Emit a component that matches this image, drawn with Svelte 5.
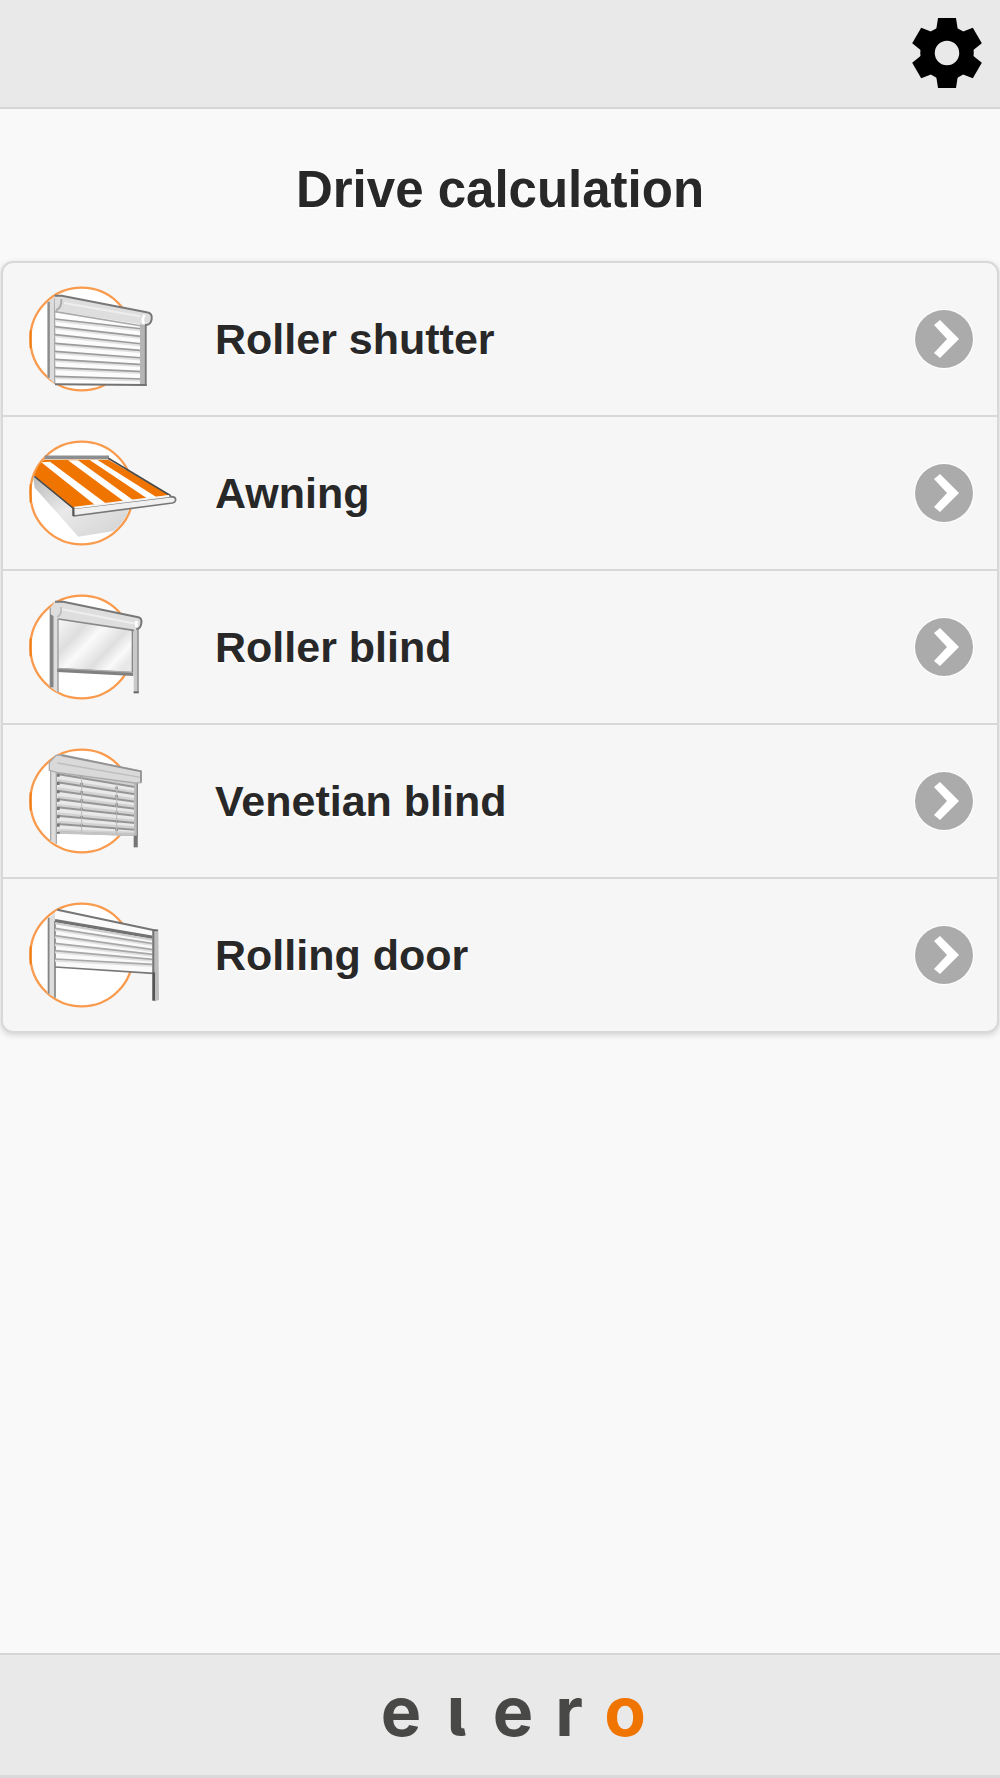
<script>
  const drives = [
    { id: "shutter", label: "Roller shutter" },
    { id: "awning", label: "Awning" },
    { id: "blind", label: "Roller blind" },
    { id: "venetian", label: "Venetian blind" },
    { id: "door", label: "Rolling door" },
  ];

  // [y at the left post, y at the right post]
  const shutterSlats = [[102, 132], [125, 155], [149, 177], [175, 197], [199, 219], [223, 239], [248, 260], [274, 282]];
  const venetianSlats = [[81, 120], [106, 142], [131, 164], [156, 185], [181, 206], [206, 228], [231, 248], [256, 264]];
  const doorSlats = [[82, 128], [104, 146], [127, 160], [149, 175], [174, 190]];
</script>

<div class="page">
  <header>
    <button class="settings" aria-label="Settings">
      <svg viewBox="-36 -36 72 72" aria-hidden="true">
        <circle r="19.5" fill="none" stroke="#000" stroke-width="14.5" />
        {#each [0, 60, 120, 180, 240, 300] as angle}
          <path d="M-9-35H9L11-22H-11Z" transform={`rotate(${angle})`} />
        {/each}
      </svg>
    </button>
  </header>

  <main>
    <h1>Drive calculation</h1>

    <ul class="drives">
      {#each drives as drive}
        <li>
          <a href={`#${drive.id}`}>
            <svg class="picture" viewBox="0 0 450 324" aria-hidden="true">
              <circle cx="161" cy="162" r="154" fill="#fff" stroke="#f99a4c" stroke-width="7" />
              <path d="M8 136V190" stroke="#f07d14" stroke-width="6" />

              {#if drive.id === "shutter"}
                <path d="M81 60L350 110V300H81Z" fill="#fcfcfc" />
                <path d="M58 54L81 32V297L58 276Z" fill="#dcdcdc" />
                <path d="M62 50V278" stroke="#8c8c8c" stroke-width="7" />
                <path d="M80 40V296" stroke="#a8a8a8" stroke-width="4" />
                {#each shutterSlats as [left, right]}
                  <path d={`M81 ${left + 4}L346 ${right + 4}`} stroke="#e2e2e2" stroke-width="8" />
                  <path d={`M81 ${left}L346 ${right}`} stroke="#9b9b9b" stroke-width="5" />
                {/each}
                <path d="M336 112H356V302H336Z" fill="#b5b5b5" />
                <path d="M353 112V302" stroke="#777" stroke-width="5" />
                <path d="M81 298L356 300" stroke="#737373" stroke-width="6" />
                <path d="M80 32L101 32L356 82Q374 84 371 103Q368 121 351 120L81 77Z" fill="#dedede" />
                <path d="M81 80L342 123" stroke="#aaa" stroke-width="5" />
                <path d="M108 54L336 94" stroke="#eee" stroke-width="6" />
                <path d="M80 32H101L356 82Q374 84 371 103Q368 121 351 120" fill="none" stroke="#777" stroke-width="6" />
                <path d="M84 76Q102 68 100 42" fill="none" stroke="#aaa" stroke-width="6" />
                <path d="M350 90Q340 104 348 116" fill="none" stroke="#fff" stroke-width="8" />
              {:else if drive.id === "awning"}
                <defs>
                  <linearGradient id="awning-shade" x1="0" y1="0" x2="1" y2="1">
                    <stop offset="0" stop-color="#bbb" />
                    <stop offset="0.45" stop-color="#e9e9e9" />
                    <stop offset="1" stop-color="#d2d2d2" />
                  </linearGradient>
                </defs>
                <path d="M15 112L138 215L303 211Q293 246 258 276L151 293L20 146Z" fill="url(#awning-shade)" />
                <path d="M50 55H243" stroke="#8b8f92" stroke-width="11" />
                <path d="M50 62H241L426 168L138 209L19 110Q27 84 42 68Z" fill="#f07400" />
                <g fill="#fff">
                  <path d="M40 70L66 68L236 195L204 200Z" />
                  <path d="M120 64L150 64L318 185L290 189Z" />
                  <path d="M185 63L209 63L386 175L360 180Z" />
                </g>
                <path d="M19 112L136 208M241 58L428 170" stroke="#4b4b4b" stroke-width="5" />
                <path d="M136 208L430 173Q443 173 443 183Q442 190 433 192L137 231Z" fill="#f0f0f0" stroke="#777" stroke-width="5" stroke-linejoin="round" />
                <path d="M139 206L424 171" stroke="#f5f5f5" stroke-width="6" />
                <path d="M136 206V231" stroke="#555" stroke-width="6" />
              {:else if drive.id === "blind"}
                <defs>
                  <linearGradient id="glass" x1="0" y1="0" x2="1" y2="0.7">
                    <stop offset="0" stop-color="#f7f7f7" />
                    <stop offset="0.3" stop-color="#dedede" />
                    <stop offset="0.48" stop-color="#fafafa" />
                    <stop offset="0.72" stop-color="#dfdfdf" />
                    <stop offset="0.88" stop-color="#fafafa" />
                    <stop offset="1" stop-color="#e8e8e8" />
                  </linearGradient>
                </defs>
                <path d="M91 78L313 110V240L91 230Z" fill="url(#glass)" />
                <path d="M64 48L91 30V300L64 280Z" fill="#ddd" />
                <path d="M71 44V283" stroke="#858585" stroke-width="11" />
                <path d="M90 75V298" stroke="#9a9a9a" stroke-width="4" />
                <path d="M88 231L316 243" stroke="#818181" stroke-width="12" />
                <path d="M88 226L316 238" stroke="#aaa" stroke-width="4" />
                <path d="M313 108H331V300H317V240H313Z" fill="#c9c9c9" />
                <path d="M313 108V238M330 108V300" stroke="#888" stroke-width="4" />
                <path d="M317 298H332" stroke="#666" stroke-width="6" />
                <path d="M81 26H106L331 73Q342 75 340 91Q337 111 321 111L91 78L68 64V43Z" fill="#dedede" />
                <path d="M98 48L323 92" stroke="#eee" stroke-width="6" />
                <path d="M91 78L318 112" stroke="#888" stroke-width="5" />
                <path d="M81 26H106L331 73Q342 75 340 91Q337 109 325 108" fill="none" stroke="#777" stroke-width="6" />
                <path d="M88 72Q102 64 99 42" fill="none" stroke="#bbb" stroke-width="5" />
                <path d="M325 84V102" stroke="#fff" stroke-width="8" />
              {:else if drive.id === "venetian"}
                <path d="M86 80L325 108V266L86 258Z" fill="#e9e9e9" />
                {#each venetianSlats as [left, right]}
                  <path d={`M88 ${left - 6}L321 ${right - 6}`} stroke="#d2d2d2" stroke-width="8" />
                  <path d={`M88 ${left}L321 ${right}`} stroke="#959595" stroke-width="6" />
                {/each}
                <path d="M86 256L322 263" stroke="#c4c4c4" stroke-width="8" />
                <path d="M161 82V252M266 94V260" stroke="#8e8e8e" stroke-width="8" stroke-dasharray="8 17" />
                <path d="M161 82V258M266 94V262" stroke="#bbb" stroke-width="3" />
                <path d="M66 48L86 30V292L66 282Z" fill="#ddd" />
                <path d="M68 64V281M85 70V290" stroke="#aaa" stroke-width="4" />
                <path d="M91 80V260" stroke="#777" stroke-width="8" stroke-dasharray="9 16" />
                <path d="M318 108H329V300H318Z" fill="#bbb" />
                <path d="M328 106V268" stroke="#888" stroke-width="4" />
                <path d="M323 266V301" stroke="#757575" stroke-width="12" />
                <path d="M64 47L84 25L106 24L339 72V107L320 108L86 76L64 70Z" fill="#d9d9d9" stroke="#aaa" stroke-width="4" />
                <path d="M88 48L338 91" stroke="#bdbdbd" stroke-width="4" />
                <path d="M100 25L339 73V106" fill="none" stroke="#929292" stroke-width="5" />
              {:else}
                <path d="M91 27L386 89V216L81 198V32Z" fill="#fafafa" />
                <path d="M58 54L81 35V290L58 276Z" fill="#ddd" />
                <path d="M62 50V278M81 60V290" stroke="#858585" stroke-width="5" />
                {#each doorSlats as [left, right]}
                  <path d={`M81 ${left + 4}L376 ${right + 4}`} stroke="#e2e2e2" stroke-width="8" />
                  <path d={`M81 ${left}L376 ${right}`} stroke="#a8a8a8" stroke-width="5" />
                {/each}
                <path d="M81 59L376 109" stroke="#727272" stroke-width="10" />
                <path d="M81 67L376 117" stroke="#ccc" stroke-width="6" />
                <path d="M88 26L386 89" stroke="#757575" stroke-width="6" />
                <path d="M81 198L376 217" stroke="#777" stroke-width="5" />
                <path d="M373 86H391L393 296L382 301L373 297Z" fill="#bdbdbd" />
                <path d="M376 88V218" stroke="#777" stroke-width="6" />
                <path d="M377 214V299" stroke="#555" stroke-width="8" />
                <path d="M373 88H390" stroke="#666" stroke-width="5" />
              {/if}
            </svg>

            <span class="label">{drive.label}</span>

            <svg class="arrow" viewBox="-30 -30 60 60" aria-hidden="true">
              <circle r="30" fill="#fff" />
              <circle r="29" fill="#ababab" />
              <path d="M-10-14L-4-19L15 0L-4 19L-10 14L3 0Z" fill="#fff" />
            </svg>
          </a>
        </li>
      {/each}
    </ul>
  </main>

  <footer>
    <div class="brand">
      <span>e</span><span class="short">l</span><span>e</span><span>r</span><span class="accent">o</span>
    </div>
  </footer>
</div>

<style>
  :global(body) {
    margin: 0;
    background: #f9f9f9;
  }

  .page {
    display: flex;
    flex-direction: column;
    min-height: 100vh;
    background: #f9f9f9;
    color: #282828;
    font-family: "Liberation Sans", Arial, sans-serif;
    font-weight: bold;
    text-shadow: 0 2px 0 #fff;
  }

  header {
    display: flex;
    justify-content: flex-end;
    padding: 17px 17px 18px;
    background: #e9e9e9;
    border-bottom: 2px solid #d6d6d6;
  }

  .settings {
    display: block;
    padding: 0;
    border: 0;
    background: none;
    cursor: pointer;
  }

  .settings svg {
    display: block;
    width: 72px;
    height: 72px;
  }

  main {
    flex: 1;
  }

  h1 {
    margin: 0;
    padding: 51px 16px 41px;
    font-size: 51px;
    line-height: 60px;
    text-align: center;
  }

  .drives {
    margin: 0 1px;
    padding: 0;
    list-style: none;
    overflow: hidden;
    background: #f6f6f6;
    border: 2px solid #d8d8d8;
    border-radius: 12px;
    box-shadow: 0 2px 6px rgba(0, 0, 0, 0.16);
  }

  li + li {
    border-top: 2px solid #d8d8d8;
  }

  a {
    display: flex;
    align-items: center;
    gap: 37px;
    height: 152px;
    padding: 0 23px 0 25px;
    color: inherit;
    text-decoration: none;
  }

  .picture {
    flex: none;
    width: 150px;
    height: 108px;
  }

  .label {
    flex: 1;
    font-size: 43px;
    line-height: 52px;
  }

  .arrow {
    flex: none;
    width: 60px;
    height: 60px;
  }

  footer {
    display: flex;
    justify-content: center;
    padding: 14px 0 22px;
    background: #e9e9e9;
    border-top: 2px solid #d6d6d6;
    border-bottom: 3px solid #d9d9d9;
  }

  .brand {
    display: grid;
    grid-template-columns: repeat(5, 38px);
    column-gap: 18px;
    align-items: baseline;
    justify-items: center;
    padding-left: 26px;
    color: #484846;
    font-family: Inter, sans-serif;
    font-size: 68px;
    line-height: 84px;
    text-shadow: none;
  }

  .short {
    font-size: 52px;
    font-weight: 900;
    line-height: 52px;
    font-feature-settings: "cv05";
  }

  .accent {
    color: #f07400;
  }
</style>
